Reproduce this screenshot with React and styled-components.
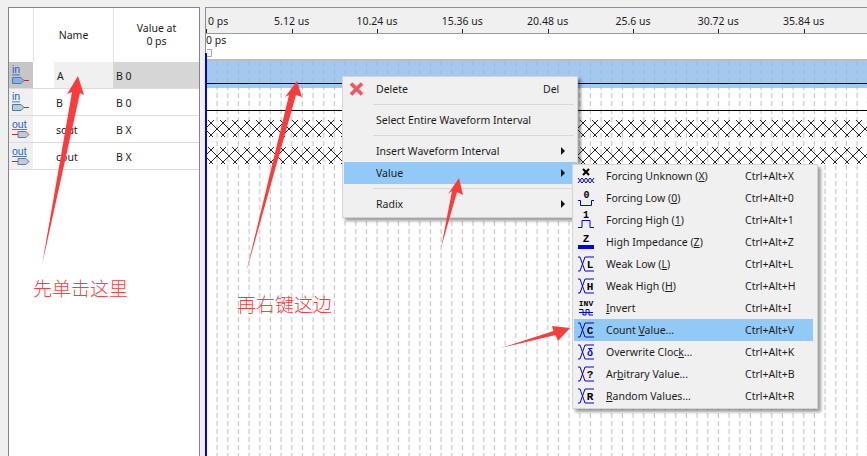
import React from 'react';
import styled, { createGlobalStyle } from 'styled-components';

const Global = createGlobalStyle`
  html, body { margin: 0; padding: 0; }
  body {
    width: 867px;
    height: 456px;
    overflow: hidden;
    background: #f0f0f0;
    font-family: "Noto Sans", "Liberation Sans", "Noto Sans CJK SC", sans-serif;
    font-size: 10.5px;
    color: #1c1c1c;
  }
`;

const Page = styled.div`
  position: relative;
  width: 867px;
  height: 456px;
  overflow: hidden;
  display: flex;
  gap: 5px;
  padding: 7px 0 0 8px;
  box-sizing: border-box;
`;

/* left panel */
const NodePanel = styled.div`
  width: 192px;
  flex: none;
  background: #fff;
  border: 1px solid #85858f;
  border-bottom: 0;
  box-sizing: border-box;
`;
const NodeHeader = styled.div`
  display: grid;
  grid-template-columns: 24px 80px 1fr;
  height: 54px;
`;
const HeaderCell = styled.div`
  display: flex;
  align-items: center;
  justify-content: center;
  text-align: center;
  line-height: 13px;
  border-left: ${p => (p.$line ? '1px solid #e2e2e2' : '0')};
`;
const NodeRow = styled.div`
  display: grid;
  grid-template-columns: 24px 80px 1fr;
  height: 27px;
  border-bottom: 1px solid #dcdcdc;
  box-sizing: border-box;
`;
const PinCell = styled.div`
  display: flex;
  align-items: center;
  background: ${p => (p.$selected ? '#c6c6c6' : '#f0f0f0')};
`;
const NameCell = styled.div`
  display: flex;
  align-items: center;
  padding: 2px 0 0 ${p => (p.$selected ? '3px' : '23px')};
  margin-left: ${p => (p.$selected ? '21px' : '0')};
  background: ${p => (p.$selected ? '#f0f0f0' : 'transparent')};
`;
const ValueCell = styled.div`
  display: flex;
  align-items: center;
  padding: 2px 0 0 3px;
  background: ${p => (p.$selected ? '#d6d6d6' : 'transparent')};
`;

/* right panel */
const WavePanel = styled.div`
  position: relative;
  flex: 1;
  border-top: 1px solid #8f8f98;
  border-left: 1px solid #8f8f98;
  min-width: 0;
`;
const Ruler = styled.div`
  display: flex;
  height: 26px;
  background: #f0f0f0;
  border-bottom: 1px solid #9a9a9a;
  box-sizing: border-box;
`;
const RulerStart = styled.div`
  width: 43px;
  flex: none;
  padding: 6px 0 0 2px;
  box-sizing: border-box;
  position: relative;
  &::after {
    content: '';
    position: absolute;
    left: 0;
    bottom: 0;
    width: 1px;
    height: 4px;
    background: #222;
  }
`;
const RulerCell = styled.div`
  width: 85.33px;
  flex: none;
  padding-top: 6px;
  text-align: center;
  position: relative;
  white-space: nowrap;
  &::after {
    content: '';
    position: absolute;
    left: 50%;
    bottom: 0;
    width: 1px;
    height: 4px;
    background: #222;
  }
`;
const TimeBar = styled.div`
  position: relative;
  height: 27px;
  background: #fff;
  border-bottom: 2px solid #bcbcbc;
  box-sizing: border-box;
  line-height: 12px;
  &::after {
    content: '';
    position: absolute;
    left: -1px;
    bottom: -2px;
    width: 2px;
    height: 8px;
    background: #0000f0;
  }
`;
const Marker = styled.div`
  position: absolute;
  left: 1px;
  top: 15px;
  width: 4px;
  height: 6px;
  background: #f4f4f4;
  border: 1px solid #aaa;
  border-left: 0;
`;
const Canvas = styled.div`
  position: relative;
  height: 396px;
  background: #fff;
  border-left: 2px solid #0000f0;
  margin-left: -1px;
`;
const GridLayer = styled.svg`
  position: absolute;
  inset: 0;
  width: 100%;
  height: 100%;
`;
const WaveRow = styled.div`
  position: relative;
  height: 27px;
  box-sizing: border-box;
  background: ${p => (p.$selected ? 'rgba(140,185,235,0.78)' : 'transparent')};
`;
const LevelLine = styled.div`
  position: absolute;
  left: 0;
  right: 0;
  top: 22px;
  height: 1px;
  background: #000;
`;
const CrossLayer = styled.svg`
  position: absolute;
  left: 0;
  top: 5px;
  width: 100%;
  height: 17px;
`;

/* menus */
const Menu = styled.div`
  position: absolute;
  left: ${p => p.$x}px;
  top: ${p => p.$y}px;
  width: ${p => p.$w}px;
  background: #f0f0f0;
  border: 1px solid #d4d4d4;
  box-sizing: border-box;
  padding: ${p => p.$pad};
  box-shadow: 3px 3px 3px rgba(0, 0, 0, 0.38);
`;
const Item = styled.div`
  position: relative;
  display: flex;
  align-items: center;
  height: 22px;
  padding-left: ${p => p.$indent}px;
  background: ${p => (p.$active ? '#91c9f7' : 'transparent')};
  color: #1c1c1c;
  white-space: pre;
`;
const ItemIcon = styled.div`
  position: absolute;
  left: ${p => p.$left}px;
  top: 2px;
  width: 18px;
  height: 18px;
`;
const Shortcut = styled.span`
  position: absolute;
  left: ${p => p.$left}px;
`;
const SubArrow = styled.span`
  position: absolute;
  right: 12px;
  top: 7px;
  width: 0;
  height: 0;
  border-left: 4px solid #111;
  border-top: 4px solid transparent;
  border-bottom: 4px solid transparent;
`;
const Divider = styled.div`
  height: 1px;
  margin: ${p => p.$gap} 3px ${p => p.$gap} 29px;
  background: #d9d9d9;
`;

/* annotations */
const ArrowLayer = styled.svg`
  position: absolute;
  left: 0;
  top: 0;
  width: 867px;
  height: 456px;
  pointer-events: none;
`;
const Note = styled.div`
  position: absolute;
  left: ${p => p.$x}px;
  top: ${p => p.$y}px;
  font-family: "Noto Sans CJK SC", sans-serif;
  font-size: 19px;
  line-height: 22px;
  font-weight: 300;
  color: #fb3f3f;
  white-space: nowrap;
`;

const PinIcon = ({ out, selected }) => (
  <svg width="24" height="26" viewBox="0 0 24 26">
    <text x="3" y={out ? 11.5 : 11} fontSize="10.5" fontFamily="Liberation Sans" fill="#1f5fc8">{out ? 'out' : 'in'}</text>
    <rect x="3" y={out ? 13 : 12.5} width={out ? 15 : 8} height="0.8" fill="#1f5fc8" />
    {out ? (
      <>
        <line x1="3" y1="18.5" x2="9" y2="18.5" stroke="#c8242c" />
        <path d="M9 15.5H17L20 18.5L17 21.5H9Z" fill="#bccbdc" stroke="#6c7c90" />
      </>
    ) : (
      <>
        <path d="M3.5 15.5H12L15 18.5L12 21.5H3.5Z" fill={selected ? '#7fb4e4' : '#bccbdc'} stroke="#56789c" />
        <line x1="15" y1="18.5" x2="20" y2="18.5" stroke="#c8242c" />
      </>
    )}
  </svg>
);

const Glyph = ({ x = 13, y = 13, size = 11, fill = '#000', children }) => (
  <text x={x} y={y} textAnchor="middle" fontSize={size} fontWeight="700" fontFamily="Liberation Mono" fill={fill}>{children}</text>
);

// blue transition shape used by the weak / count / clock icons
const Transition = () => (
  <path d="M1 2H3L8 16H17M1 16H3L8 2H17" fill="none" stroke="#0000e8" strokeWidth="1" />
);

const ValueIcon = ({ kind }) => {
  const blue = '#0000e8';
  let body = null;
  if (kind === 'unknown') {
    body = (
      <>
        <path d="M6 2L12 8M12 2L6 8" stroke="#000" strokeWidth="2" />
        <path d="M1 11L5 16L9 11L13 16L17 11M1 16L5 11L9 16L13 11L17 16" stroke={blue} strokeWidth="1" fill="none" />
      </>
    );
  } else if (kind === 'low') {
    body = (
      <>
        <Glyph x={9.5} y={9} size={10}>0</Glyph>
        <path d="M1 11.5H3.5V16.5H14.5V11.5H17" stroke={blue} fill="none" />
      </>
    );
  } else if (kind === 'high') {
    body = (
      <>
        <Glyph x={9} y={7} size={10}>1</Glyph>
        <path d="M1 16.5H5V9.5H13V16.5H17" stroke={blue} fill="none" />
      </>
    );
  } else if (kind === 'z') {
    body = (
      <>
        <Glyph x={9} y={9} size={11}>Z</Glyph>
        <rect x="1" y="12" width="16" height="4" fill={blue} />
      </>
    );
  } else if (kind === 'inv') {
    body = (
      <>
        <text x="9" y="7" textAnchor="middle" fontSize="8" fontWeight="700" fontFamily="Liberation Mono" fill="#000">INV</text>
        <path d="M2 10.5H6V16H9V10.5H12V16H16M2 13.5H16" stroke={blue} fill="none" />
      </>
    );
  } else {
    body = (
      <>
        <Transition />
        <Glyph x={13} y={13} size={kind === 'clock' ? 10 : 11} fill={kind === 'clock' ? blue : '#000'}>
          {kind === 'clock' ? 'δ' : kind}
        </Glyph>
      </>
    );
  }
  return <svg width="18" height="18" viewBox="0 0 18 18">{body}</svg>;
};

const Ul = styled.u`
  text-underline-offset: 1px;
`;

const values = [
  { icon: 'unknown', label: <>Forcing Unknown (<Ul>X</Ul>)</>, key: 'Ctrl+Alt+X' },
  { icon: 'low', label: <>Forcing Low (<Ul>0</Ul>)</>, key: 'Ctrl+Alt+0' },
  { icon: 'high', label: <>Forcing High (<Ul>1</Ul>)</>, key: 'Ctrl+Alt+1' },
  { icon: 'z', label: <>High Impedance (<Ul>Z</Ul>)</>, key: 'Ctrl+Alt+Z' },
  { icon: 'L', label: <>Weak Low (<Ul>L</Ul>)</>, key: 'Ctrl+Alt+L' },
  { icon: 'H', label: <>Weak High (<Ul>H</Ul>)</>, key: 'Ctrl+Alt+H' },
  { icon: 'inv', label: <><Ul>I</Ul>nvert</>, key: 'Ctrl+Alt+I' },
  { icon: 'C', label: <>Count <Ul>V</Ul>alue...</>, key: 'Ctrl+Alt+V', active: true },
  { icon: 'clock', label: <>Overwrite Cloc<Ul>k</Ul>...</>, key: 'Ctrl+Alt+K' },
  { icon: '?', label: <>Ar<Ul>b</Ul>itrary Value...</>, key: 'Ctrl+Alt+B' },
  { icon: 'R', label: <><Ul>R</Ul>andom Values...</>, key: 'Ctrl+Alt+R' },
];

const nodes = [
  { name: 'A', value: 'B 0', selected: true },
  { name: 'B', value: 'B 0' },
  { name: 'sout', value: 'B X', out: true },
  { name: 'cout', value: 'B X', out: true },
];

const ticks = ['5.12 us', '10.24 us', '15.36 us', '20.48 us', '25.6 us', '30.72 us', '35.84 us'];

export default function App() {
  return (
    <Page>
      <Global />
      <NodePanel>
        <NodeHeader>
          <HeaderCell />
          <HeaderCell $line>Name</HeaderCell>
          <HeaderCell $line>Value at<br />0 ps</HeaderCell>
        </NodeHeader>
        {nodes.map(n => (
          <NodeRow key={n.name}>
            <PinCell $selected={n.selected}><PinIcon out={n.out} selected={n.selected} /></PinCell>
            <NameCell $selected={n.selected}>{n.name}</NameCell>
            <ValueCell $selected={n.selected}>{n.value}</ValueCell>
          </NodeRow>
        ))}
      </NodePanel>

      <WavePanel>
        <Ruler>
          <RulerStart>0 ps</RulerStart>
          {ticks.map(t => <RulerCell key={t}>{t}</RulerCell>)}
        </Ruler>
        <TimeBar>
          0 ps
          <Marker />
        </TimeBar>
        <Canvas>
          <GridLayer>
            <defs>
              <pattern id="grid" x="0" y="0" width="10.667" height="8" patternUnits="userSpaceOnUse">
                <rect x="9.5" y="0" width="1" height="5" fill="#bdbdbd" />
              </pattern>
            </defs>
            <rect width="100%" height="100%" fill="url(#grid)" />
          </GridLayer>
          <WaveRow $selected><LevelLine /></WaveRow>
          <WaveRow><LevelLine /></WaveRow>
          {['a', 'b'].map(k => (
            <WaveRow key={k}>
              <CrossLayer>
                <defs>
                  <pattern id={'cross' + k} x="0" y="0" width="12" height="12" patternUnits="userSpaceOnUse">
                    <path d="M1 0L12 11M0 11L1 12M7 0L0 7M12 7L7 12" stroke="#111" strokeWidth="0.9" fill="none" />
                  </pattern>
                </defs>
                <rect width="100%" height="100%" fill={'url(#cross' + k + ')'} />
              </CrossLayer>
            </WaveRow>
          ))}
        </Canvas>
      </WavePanel>

      <Menu $x={342} $y={76} $w={236} $pad="1px 0 2px 1px">
        <Item $indent={32}>
          <ItemIcon $left={4}>
            <svg width="18" height="18" viewBox="0 0 18 18">
              <path d="M3 3.5L14 14.5M14 3.5L3 14.5" stroke="#f4555a" strokeWidth="3.6" />
            </svg>
          </ItemIcon>
          Delete
          <Shortcut $left={199}>Del</Shortcut>
        </Item>
        <Divider $gap="4px" />
        <Item $indent={32}>Select Entire Waveform Interval</Item>
        <Divider $gap="4px" />
        <Item $indent={32}>Insert Waveform Interval<SubArrow /></Item>
        <Item $indent={32} $active>Value<SubArrow /></Item>
        <Divider $gap="4px" />
        <Item $indent={32}>Radix<SubArrow /></Item>
      </Menu>

      <Menu $x={572} $y={164} $w={246} $pad="0 4px 1px 1px">
        {values.map(v => (
          <Item key={v.key} $indent={32} $active={v.active}>
            <ItemIcon $left={3}><ValueIcon kind={v.icon} /></ItemIcon>
            <span>{v.label}</span>
            <Shortcut $left={171}>{v.key}</Shortcut>
          </Item>
        ))}
      </Menu>

      <ArrowLayer viewBox="0 0 867 456">
        <g fill="#fd3b3b">
          <polygon points="78,76 84,95 80,93 42,265 72,92 67,94" />
          <polygon points="297,81 302,97 296,95 246,273 289,95 285,97" />
          <polygon points="459,178 463,195 457,192 441,248 452,191 448,194" />
          <polygon points="570,328 558,341 555.5,335 501,348 553.5,331 552,326" />
        </g>
      </ArrowLayer>
      <Note $x={33} $y={277}>先单击这里</Note>
      <Note $x={237} $y={293}>再右键这边</Note>
    </Page>
  );
}
